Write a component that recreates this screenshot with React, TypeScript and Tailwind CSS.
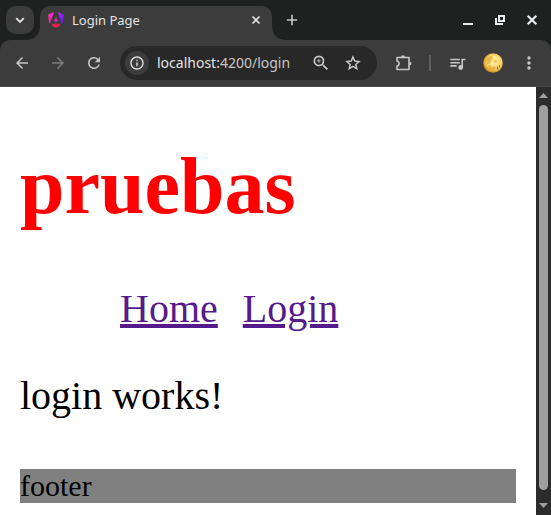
import React from "react";
import {
  MdArrowBack,
  MdArrowForward,
  MdInfoOutline,
  MdMoreVert,
  MdQueueMusic,
  MdRefresh,
  MdZoomIn,
} from "react-icons/md";

function AngularLogo() {
  return (
    <svg viewBox="0 0 16 16" className="size-4 shrink-0" aria-hidden="true">
      <defs>
        <linearGradient id="ng-warm" x1="0" y1="0" x2="0.4" y2="1">
          <stop offset="0" stopColor="#f637e3" />
          <stop offset="1" stopColor="#ff1a8a" />
        </linearGradient>
        <linearGradient id="ng-cool" x1="0" y1="0" x2="1" y2="0.3">
          <stop offset="0" stopColor="#c02cf0" />
          <stop offset="1" stopColor="#6a1cff" />
        </linearGradient>
      </defs>
      <path d="M6.2 0 .2 2.400l.9 8.900h.8L6.200 0Z" fill="url(#ng-warm)" />
      <path d="m9.800 0 6 2.400-.9 8.900h-.8L9.800 0Z" fill="url(#ng-cool)" />
      <path d="M8 5 10 9.600H6L8 5Z" fill="#e32bc0" />
      <path d="m4.600 11.800-.6 1.700L8 15.900l4-2.400-.6-1.700H4.600Z" fill="#ff1a55" />
    </svg>
  );
}

function StarIcon() {
  return (
    <svg viewBox="0 0 18 18" className="size-[18px]" fill="none" stroke="currentColor" strokeWidth="1.5" aria-hidden="true">
      <path d="m9 3 1.700 4.100 4.400.4-3.300 2.900 1 4.300L9 12.400l-3.800 2.300 1-4.300-3.300-2.900 4.400-.4L9 3Z" />
    </svg>
  );
}

function ExtensionIcon() {
  return (
    <svg viewBox="0 0 18 18" className="size-[18px]" fill="none" stroke="currentColor" strokeWidth="1.6" strokeLinejoin="round" aria-hidden="true">
      <path d="M2 3.500h12v12H2v-3.500c2.700-.5 2.700-4.500 0-5V3.500Z" />
      <path d="M6 3.200a2 2 0 0 1 4 0ZM14.400 7.500a2 2 0 0 1 0 4Z" fill="currentColor" stroke="none" />
    </svg>
  );
}

function Avatar() {
  return (
    <svg viewBox="0 0 20 20" className="size-5" aria-hidden="true">
      <defs>
        <radialGradient id="moon" cx=".55" cy=".45" r=".55">
          <stop offset="0" stopColor="#ffeb9a" />
          <stop offset=".7" stopColor="#f6d268" />
          <stop offset="1" stopColor="#cf8a1c" />
        </radialGradient>
      </defs>
      <circle cx="10" cy="10" r="9.800" fill="url(#moon)" />
      <path d="M3 7c1-3 4-4 6-4l1 3-3 2 1 2-4 1-1-4Zm1 6 3-1 2 2 3-1 1 3-3 2c-3 0-5-2-6-5Zm7-6 3 1-1 2-2-1V7Z" fill="#e0a52c" opacity=".6" />
      <path d="M9 3.500c2-1 5 0 6 2l-3 1-3-3Zm-1 6 4 1-1 2-3-1V9.500Z" fill="#fff1b4" opacity=".7" />
      <path d="M14.500 13.500v3M16.500 12v2.500" stroke="#69521d" strokeWidth=".8" />
    </svg>
  );
}

const iconButton = "flex size-7 shrink-0 items-center justify-center rounded-full text-[#c7c7c7]";

function TabStrip() {
  return (
    <div className="flex h-10 items-center bg-[#1f2120] pl-1.5 pr-[3px]">
      <button aria-label="Search tabs" className="flex size-7 shrink-0 items-center justify-center rounded-[10px] bg-[#3c3c3c] text-[#e3e3e3]">
        <svg viewBox="0 0 12 12" className="size-3" fill="none" stroke="currentColor" strokeWidth="1.8" aria-hidden="true">
          <path d="m2.200 4.200 3.800 3.800 3.800-3.800" />
        </svg>
      </button>
      <div className="relative ml-1.5 flex h-[34px] w-[232px] min-w-0 items-center self-end rounded-t-[10px] bg-[#3c3c3c] px-2 pb-1.5 before:absolute before:bottom-0 before:-left-3 before:size-3 before:bg-[radial-gradient(circle_at_0_0,transparent_11px,#3c3c3c_12px)] after:absolute after:bottom-0 after:-right-3 after:size-3 after:bg-[radial-gradient(circle_at_100%_0,transparent_11px,#3c3c3c_12px)]">
        <AngularLogo />
        <span className="ml-2 flex-1 truncate text-[13px] leading-5 text-[#e3e3e3]">Login Page</span>
        <button aria-label="Close tab" className="flex size-4 items-center justify-center text-[#e3e3e3]">
          <svg viewBox="0 0 10 10" className="size-2.5" stroke="currentColor" strokeWidth="1.600" aria-hidden="true">
            <path d="m1.500 1.500 7 7m0-7-7 7" />
          </svg>
        </button>
      </div>
      <button aria-label="New tab" className="ml-1.5 flex size-7 shrink-0 items-center justify-center text-[#c7c7c7]">
        <svg viewBox="0 0 12 12" className="size-3" stroke="currentColor" strokeWidth="1.600" aria-hidden="true">
          <path d="M6 .8v10.400M.8 6h10.400" />
        </svg>
      </button>
      <div className="ml-auto flex shrink-0 text-[#e8eaed]">
        <button aria-label="Minimize" className="flex h-7 w-8 items-center justify-center">
          <svg viewBox="0 0 12 12" className="size-3" aria-hidden="true">
            <path d="M1 9h10v2H1z" fill="currentColor" />
          </svg>
        </button>
        <button aria-label="Restore" className="flex h-7 w-8 items-center justify-center">
          <svg viewBox="0 0 12 12" className="size-3" fill="none" stroke="currentColor" strokeWidth="2" aria-hidden="true">
            <path d="M5 2h5v5H5zM2 4v6h7" />
          </svg>
        </button>
        <button aria-label="Close window" className="flex h-7 w-8 items-center justify-center">
          <svg viewBox="0 0 12 12" className="size-3" stroke="currentColor" strokeWidth="2.200" aria-hidden="true">
            <path d="m1.700 1.700 8.600 8.600m0-8.600-8.600 8.600" />
          </svg>
        </button>
      </div>
    </div>
  );
}

function Toolbar() {
  return (
    <div className="bg-[#1f2120]">
      <div className="flex h-[47px] items-center rounded-t-[10px] border-b border-[#4a4a4a] bg-[#3c3c3c] px-2">
        <div className="flex gap-2">
          <button aria-label="Back" className={iconButton}><MdArrowBack size={18} /></button>
          <button aria-label="Forward" disabled className="flex size-7 shrink-0 items-center justify-center rounded-full text-[#7c7c7c]"><MdArrowForward size={18} /></button>
          <button aria-label="Reload" className={iconButton}><MdRefresh size={18} /></button>
        </div>
        <div className="ml-3 flex h-[34px] min-w-0 flex-1 items-center rounded-full bg-[#282828] pl-[5px] pr-2.5">
          <button aria-label="View site information" className="flex size-6 shrink-0 items-center justify-center rounded-full bg-[#3c3c3c] text-[#e3e3e3]"><MdInfoOutline size={16} /></button>
          <div aria-label="Address" className="ml-2 min-w-0 flex-1 truncate text-sm leading-5 text-[#c7c7c7]">
            <span className="text-[#e3e3e3]">localhost:</span>4200/login
          </div>
          <button aria-label="Zoom" className={iconButton}><MdZoomIn size={20} /></button>
          <button aria-label="Bookmark this tab" className="ml-1 flex size-7 shrink-0 items-center justify-center text-[#c7c7c7]"><StarIcon /></button>
        </div>
        <div className="ml-3 flex shrink-0 items-center">
          <button aria-label="Extensions" className="flex h-7 w-[30px] shrink-0 items-center justify-center text-[#c7c7c7]"><ExtensionIcon /></button>
          <div className="ml-2.5 mr-3 h-4 w-0.5 bg-[#5e5e5e]" />
          <button aria-label="Media controls" className={iconButton}><MdQueueMusic size={19} /></button>
          <button aria-label="Profile" className="ml-2 flex size-7 items-center justify-center"><Avatar /></button>
          <button aria-label="Menu" className="ml-2 flex size-7 items-center justify-center text-[#c7c7c7]"><MdMoreVert size={20} /></button>
        </div>
      </div>
    </div>
  );
}

function Scrollbar() {
  return (
    <div className="flex w-[15px] shrink-0 flex-col items-center bg-[#2c2c2c] text-[#9f9f9f]" aria-hidden="true">
      <svg viewBox="0 0 9 18" className="h-[18px] w-[9px]"><path d="M0 11h9L4.500 6z" fill="currentColor" /></svg>
      <div className="w-[9px] flex-1 rounded-full bg-[#9f9f9f]" />
      <svg viewBox="0 0 9 25" className="h-[25px] w-[9px]"><path d="M0 13h9l-4.500 5z" fill="currentColor" /></svg>
    </div>
  );
}

export default function App() {
  return (
    <div className="flex min-h-screen flex-col bg-white font-['Noto_Sans',sans-serif]">
      <TabStrip />
      <Toolbar />
      <div className="flex flex-1">
        <div className="min-w-0 flex-1 px-5 pb-3 font-['Liberation_Serif',serif] text-[40px] leading-[46px] text-black">
          <h1 className="mt-[53px] text-[80px] leading-[92px] font-bold text-[#ff0000]">pruebas</h1>
          <nav className="mt-[54px] flex gap-[25px] pl-[100px] text-[#551a8b]">
            <a href="#home" className="underline">Home</a>
            <a href="#login" className="underline">Login</a>
          </nav>
          <p className="mt-[41px]">login works!</p>
          <footer className="mt-[50px] bg-[#808080] text-[30px] leading-[34px]">footer</footer>
        </div>
        <Scrollbar />
      </div>
    </div>
  );
}
